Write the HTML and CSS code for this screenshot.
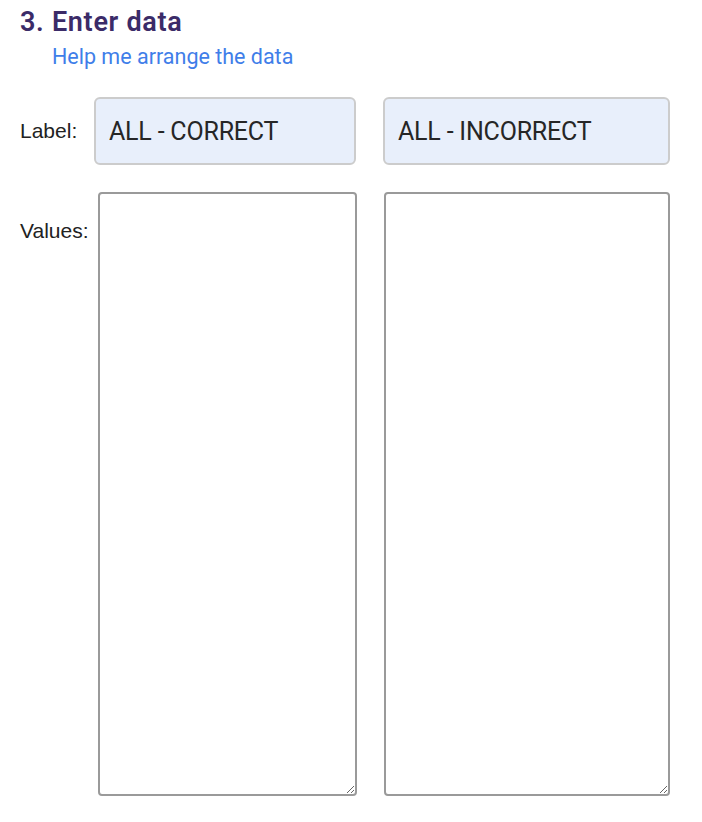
FILE: index.html
```html
<!DOCTYPE html>
<html>
<head>
<meta charset="utf-8">
<link rel="stylesheet" href="styles.css">
</head>
<body>
<div class="page">
  <h2 class="title">3. Enter data</h2>
  <a class="help" href="#">Help me arrange the data</a>
  <div class="row label-row">
    <span class="row-label lbl1">Label:</span>
    <input class="label-input first" type="text" value="ALL - CORRECT">
    <input class="label-input second" type="text" value="ALL - INCORRECT">
  </div>
  <div class="row values-row">
    <span class="row-label lbl2">Values:</span>
    <textarea class="values first"></textarea>
    <textarea class="values second"></textarea>
  </div>
</div>
</body>
</html>
```
FILE: styles.css
```css
html, body {
  margin: 0;
  padding: 0;
  background: #ffffff;
}
.page {
  padding: 6px 0 0 20px;
  width: 651px;
  font-family: Roboto, "Liberation Sans", sans-serif;
}
.title {
  margin: 0;
  font-size: 27px;
  font-weight: 600;
  color: #3b2b68;
  letter-spacing: 0.7px;
  line-height: 32px;
}
.help {
  display: inline-block;
  margin: 5px 0 0 32px;
  font-size: 21.5px;
  line-height: 28px;
  color: #3f7ee9;
  text-decoration: none;
}
.row {
  display: flex;
  align-items: flex-start;
}
.label-row {
  margin-top: 26px;
  align-items: center;
}
.row-label {
  font-family: "Liberation Sans", Arial, sans-serif;
  font-size: 21px;
  color: #222222;
}
.lbl1 {
  width: 74px;
}
.lbl2 {
  width: 78px;
  margin-top: 27px;
}
.label-input {
  box-sizing: border-box;
  height: 68px;
  background: #e8effb;
  border: 2px solid #cccccc;
  border-radius: 6px;
  padding: 0 0 0 13px;
  font-family: Roboto, "Liberation Sans", sans-serif;
  font-size: 25px;
  color: #262626;
  letter-spacing: -0.2px;
  outline: none;
}
.label-input.first {
  width: 262px;
}
.label-input.second {
  width: 287px;
  margin-left: 27px;
}
.values-row {
  margin-top: 27px;
}
.values {
  box-sizing: border-box;
  height: 604px;
  border: 2px solid #9a9a9a;
  border-radius: 4px;
  background: #ffffff;
  resize: vertical;
  margin: 0;
  outline: none;
}
.values.first {
  width: 259px;
}
.values.second {
  width: 286px;
  margin-left: 27px;
}
```
